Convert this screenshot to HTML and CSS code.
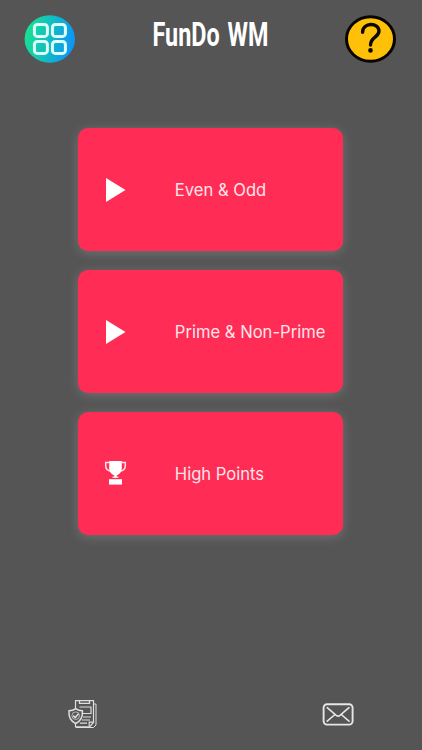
FILE: index.html
```
<!DOCTYPE html>
<html lang="en">
<head>
  <meta charset="UTF-8">
  <meta name="viewport" content="width=device-width, initial-scale=1.0">
  <title>FunDo WM</title>
  <link rel="stylesheet" href="styles.css">
</head>
<body>
  <div class="app">
    <!-- top bar -->
    <header class="header">
      <svg class="round-icon" viewBox="0 0 51 48">
        <defs>
          <linearGradient id="apps" x1="0" y1="0.3" x2="1" y2="0.5">
            <stop offset="0" stop-color="#18e48c"/>
            <stop offset="1" stop-color="#0c94fa"/>
          </linearGradient>
        </defs>
        <ellipse cx="25.8" cy="24" rx="25.2" ry="23.8" fill="url(#apps)"/>
        <g fill="none" stroke="#dcfffa" stroke-width="3">
          <rect x="10.4" y="9.4" width="13" height="12" rx="3"/>
          <rect x="28.4" y="9.4" width="13" height="12" rx="3"/>
          <rect x="10.4" y="26.4" width="13" height="12" rx="3"/>
          <rect x="28.4" y="26.4" width="13" height="12" rx="3"/>
        </g>
      </svg>
      <svg class="title" viewBox="0 0 120 48" role="heading" aria-level="1">
        <text x="2.5" y="31" textLength="116" lengthAdjust="spacingAndGlyphs">FunDo WM</text>
      </svg>
      <svg class="round-icon" viewBox="0 0 51 48">
        <ellipse cx="25.5" cy="24" rx="24" ry="22.3" fill="#ffc107" stroke="#080500" stroke-width="3"/>
        <path d="M17.6 17.3 C17.6 7 34 7.2 34 16 C34 22.5 25.5 22 25.5 30" fill="none" stroke="#0c0800" stroke-width="3.4" stroke-linecap="round"/>
        <circle cx="25.5" cy="35.4" r="2.3" fill="#0c0800"/>
      </svg>
    </header>

    <!-- menu -->
    <main class="menu">
      <div class="card">
        <svg class="card-icon" viewBox="0 0 24 28"><path d="M3 2 L22.5 14 L3 26 Z" fill="#fff"/></svg>
        <span class="card-text">Even &amp; Odd</span>
      </div>
      <div class="card">
        <svg class="card-icon" viewBox="0 0 24 28"><path d="M3 2 L22.5 14 L3 26 Z" fill="#fff"/></svg>
        <span class="card-text">Prime &amp; Non-Prime</span>
      </div>
      <div class="card">
        <svg class="card-icon" viewBox="0 0 24 28">
          <path d="M6.2 2 H18.8 V9 C18.8 13.5 16 15.5 13.7 16.3 V18.3 H11.3 V16.3 C9 15.5 6.2 13.5 6.2 9 Z" fill="#fff"/>
          <path d="M6.5 3.5 H2.7 V6.5 C2.7 9.6 4.5 11.5 7.2 12 M18.5 3.5 H22.3 V6.5 C22.3 9.6 20.5 11.5 17.8 12" fill="none" stroke="#ffe4ea" stroke-width="1.5"/>
          <path d="M9.5 18.2 H15.5" stroke="#fff" stroke-width="1.2"/>
          <rect x="6" y="20.2" width="13" height="5.4" fill="#fff"/>
        </svg>
        <span class="card-text">High Points</span>
      </div>
    </main>

    <!-- bottom links -->
    <footer class="footer">
      <svg class="footer-icon" viewBox="0 0 32 32" fill="none" stroke="#dedede" stroke-width="1.2">
        <path d="M8.5 10 V2.7 H26.5 V24.5 L22.5 28.8 H8.5 V24"/>
        <path d="M26.8 6 H29 V27 L26.5 29.5 H9" stroke-width="1"/>
        <path d="M12.5 2.7 V5.3 H22.5 V2.7" stroke-width="1.3"/>
        <path d="M12.5 9 H24 V15.5 H15.5 M16 19 H24 M15 22 H23 M13 25.2 H20"/>
        <path d="M22.2 28.5 V24.2 H26.3"/>
        <path d="M8.7 10.7 C6.8 12.2 4.5 12.8 2 12.8 C1.5 18.5 3.5 23.2 8.7 25.5 C13.9 23.2 15.9 18.5 15.4 12.8 C12.9 12.8 10.6 12.2 8.7 10.7 Z" fill="#575757" stroke-width="1.5"/>
        <circle cx="8.7" cy="17.7" r="3.8" stroke-width=".7"/>
        <path d="M6.2 17.6 L8.2 19.6 L11.5 15.8" stroke-width="1.5"/>
      </svg>
      <svg class="footer-icon" viewBox="0 0 32 32" fill="none" stroke="#e6e6e6">
        <rect x="1.6" y="6.2" width="29" height="20.4" rx="3.5" stroke-width="1.9"/>
        <path d="M5.2 9.7 L14.2 17.4 Q16.1 18.8 18 17.4 L27 9.7 M5.2 23.2 L12.4 17 M27 23.2 L19.8 17" stroke-width="1.6" stroke-linecap="round"/>
      </svg>
    </footer>
  </div>
</body>
</html>
```
FILE: styles.css
```
* {
  box-sizing: border-box;
}
body {
  margin: 0;
  background: #555;
  font-family: Inter, "Liberation Sans", sans-serif;
}
.app {
  display: flex;
  flex-direction: column;
  height: 750px;
  overflow: hidden;
}
.header {
  display: flex;
  justify-content: space-between;
  align-items: flex-start;
  padding: 15px 26px 0 24px;
  height: 128.4px;
}
.round-icon {
  width: 51px;
  height: 48px;
}
.title {
  width: 120px;
  height: 48px;
  overflow: visible;
}
.title text {
  font-family: Roboto, "Liberation Sans", sans-serif;
  font-size: 33px;
  font-weight: 700;
  word-spacing: 3px;
  fill: #fff;
}
.menu {
  display: flex;
  flex-direction: column;
  gap: 19px;
  padding: 0 79px 0 77.5px;
}
.card {
  display: flex;
  align-items: center;
  height: 122.8px;
  padding-left: 25px;
  border-radius: 10px;
  background: #ff2d55;
  box-shadow: 0 2px 11px rgba(150, 150, 150, .45);
}
.card-icon {
  width: 24px;
  height: 28px;
  margin-right: 48.3px;
}
.card-text {
  padding-top: 1px;
  font-size: 16.6px;
  color: #ffe4ea;
  white-space: nowrap;
}
.footer {
  display: flex;
  justify-content: space-between;
  margin-top: auto;
  padding: 0 68px 20px 67px;
}
.footer-icon {
  width: 32px;
  height: 32px;
}
```
